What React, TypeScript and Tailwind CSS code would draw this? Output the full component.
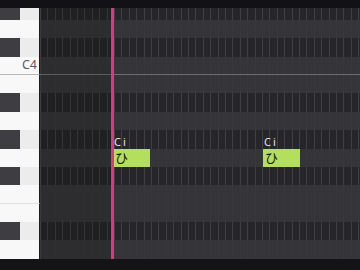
import React from 'react';

// rows from top (D#4 partially hidden under the top bar) down to C#3
const rows: { name: string; black: boolean }[] = [
    { name: 'D#4', black: true },
    { name: 'D4', black: false },
    { name: 'C#4', black: true },
    { name: 'C4', black: false },
    { name: 'B3', black: false },
    { name: 'A#3', black: true },
    { name: 'A3', black: false },
    { name: 'G#3', black: true },
    { name: 'G3', black: false },
    { name: 'F#3', black: true },
    { name: 'F3', black: false },
    { name: 'E3', black: false },
    { name: 'D#3', black: true },
    { name: 'D3', black: false },
    { name: 'C#3', black: true },
];

const notes = [
    { left: 113, lyric: 'ひ', alias: 'Ci' },
    { left: 263, lyric: 'ひ', alias: 'Ci' },
];

function Row({ name, black }: { name: string; black: boolean }) {
    const isC = name === 'C4';
    const isF = name === 'F3';
    return (
        <div className="flex h-[18.4px] shrink-0">
            {/* Piano key */}
            <div
                className={`flex w-[40px] shrink-0 border-r border-[#1c1b1f] ${isC ? 'border-b border-b-[#b9b9bc]' : ''} ${isF ? 'border-b border-b-[#e2e2e4]' : ''}`}
            >
                {black ? (
                    <>
                        <div className="w-[20px] bg-[#3e3d41]" />
                        <div className="flex-1 bg-[#ececec]" />
                    </>
                ) : (
                    <div className="flex flex-1 items-center justify-end bg-[#f8f8f8] pr-[2px]">
                        {isC && (
                            <span className="font-['Noto_Sans',sans-serif] text-[12.5px] leading-none text-[#5a5a5e]">
                                C4
                            </span>
                        )}
                    </div>
                )}
            </div>
            {/* Grid lane */}
            <div
                className={
                    (black
                        ? 'flex-1 bg-[#262529] bg-[repeating-linear-gradient(90deg,#403f44_0px,#403f44_1px,transparent_1px,transparent_7.4px)]'
                        : 'flex-1 bg-[#353438] bg-[repeating-linear-gradient(90deg,#38373b_0px,#38373b_1px,transparent_1px,transparent_7.4px)]') +
                    (isC ? ' border-b border-[#6d6c70]' : '')
                }
            />
        </div>
    );
}

export default function App() {
    return (
        <div className="flex h-[270px] w-[360px] flex-col overflow-hidden bg-[#141316] font-['Noto_Sans',sans-serif]">
            <div className="h-[8px] shrink-0 bg-[#121115]" />
            <div className="relative h-[251px] shrink-0 overflow-hidden">
                <div className="-mt-[6.6px] flex flex-col">
                    {rows.map((r) => (
                        <Row key={r.name} {...r} />
                    ))}
                </div>

                {/* already-played region shade */}
                <div className="absolute left-[41px] top-0 h-full w-[70px] bg-black/15" />

                {/* Notes */}
                {notes.map((n, i) => (
                    <div key={i} className="absolute top-[128px]" style={{ left: n.left }}>
                        <div className="pl-[1px] text-[11px] leading-[12px] tracking-[2px] text-[#e4e4e4]">{n.alias}</div>
                        <div className="mt-[0.5px] flex h-[18px] w-[37px] items-center bg-[#b3df5d] pl-[2px] font-['Noto_Sans_CJK_JP',sans-serif] text-[13px] leading-none text-[#141414]">
                            {n.lyric}
                        </div>
                    </div>
                ))}

                {/* Playhead */}
                <div className="absolute left-[111px] top-0 h-full w-[3px] bg-[#e0367f]" />
            </div>
            <div className="flex-1 bg-[#141316]" />
        </div>
    );
}
